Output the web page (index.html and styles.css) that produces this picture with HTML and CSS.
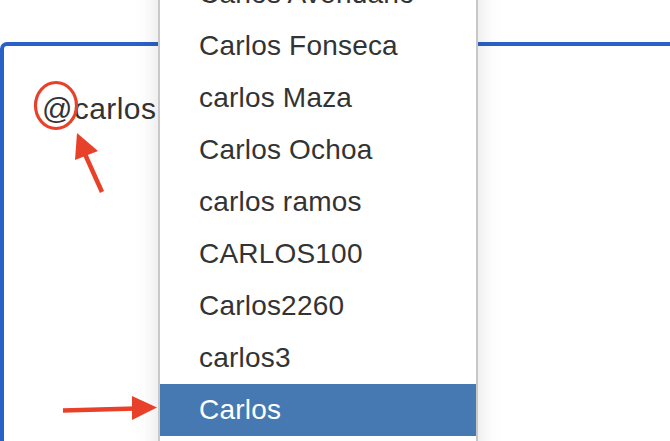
FILE: index.html
```html
<!DOCTYPE html>
<html>
<head>
<meta charset="utf-8">
<link rel="stylesheet" href="styles.css">
</head>
<body>
<div class="stage">
  <div class="editor">
    <div class="line"><span class="at">@</span>carlos</div>
  </div>
  <ul class="menu">
    <li class="item">Carlos Avendaño</li>
    <li class="item">Carlos Fonseca</li>
    <li class="item">carlos Maza</li>
    <li class="item">Carlos Ochoa</li>
    <li class="item">carlos ramos</li>
    <li class="item">CARLOS100</li>
    <li class="item">Carlos2260</li>
    <li class="item">carlos3</li>
    <li class="item active">Carlos</li>
  </ul>
  <svg class="marks" width="670" height="441" viewBox="0 0 670 441">
    <ellipse cx="56" cy="105.5" rx="20.5" ry="23" fill="none" stroke="#e8412a" stroke-width="3.2"/>
    <line x1="102" y1="192" x2="84" y2="152" stroke="#e8412a" stroke-width="4.5"/>
    <polygon points="77,133 75,160 98,151" fill="#e8412a"/>
    <line x1="63" y1="410.5" x2="136" y2="408.5" stroke="#e8412a" stroke-width="4.5"/>
    <polygon points="157,407.5 132,396 132,420" fill="#e8412a"/>
  </svg>
</div>
</body>
</html>
```
FILE: styles.css
```css
html, body {
  margin: 0;
  padding: 0;
  background: #ffffff;
  overflow: hidden;
}
.stage {
  position: relative;
  width: 670px;
  height: 441px;
  overflow: hidden;
  font-family: "Liberation Sans", Arial, sans-serif;
}
.editor {
  margin-top: 42px;
  width: 720px;
  height: 460px;
  border: 4px solid #2962c6;
  border-top-left-radius: 7px;
  padding: 37px 0 0 38px;
  box-sizing: border-box;
}
.line {
  font-size: 30px;
  line-height: 52px;
  letter-spacing: 0.4px;
  color: #333333;
}
.at {
  margin-right: 1px;
}
.menu {
  position: absolute;
  left: 158px;
  top: -32px;
  width: 316px;
  margin: 0;
  padding: 0 0 40px 0;
  list-style: none;
  background: #ffffff;
  border-left: 2px solid #c8c8c8;
  border-right: 2px solid #c8c8c8;
  box-shadow: 0 0 22px rgba(0, 0, 0, 0.13);
}
.item {
  height: 52px;
  line-height: 52px;
  padding-left: 39px;
  font-size: 28px;
  letter-spacing: 0.2px;
  color: #333333;
  white-space: nowrap;
}
.item.active {
  background: #4679b2;
  color: #ffffff;
}
.marks {
  position: absolute;
  left: 0;
  top: 0;
}
```
